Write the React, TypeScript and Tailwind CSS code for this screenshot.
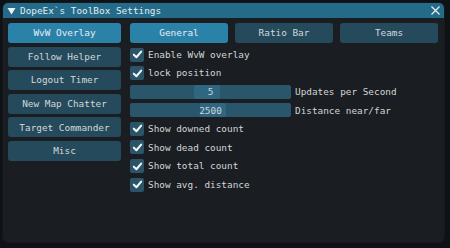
import React from "react";

const mono = { fontFamily: '"DejaVu Sans Mono", "Liberation Mono", monospace' };

function Check({ label }: { label: string }) {
  return (
    <div className="flex items-center h-[15px]">
      <div className="w-[14px] h-[14px] rounded-[2px] bg-[#2a5467] flex items-center justify-center">
        <svg width="11" height="11" viewBox="0 0 12 12">
          <polyline points="2,6.2 4.8,9 10,2.8" fill="none" stroke="#f2f4f5" strokeWidth="2.2" strokeLinecap="round" strokeLinejoin="round" />
        </svg>
      </div>
      <span className="ml-[4px] text-[#d2d5d7] leading-none">{label}</span>
    </div>
  );
}

function Slider({ value, label, grabLeft, grabWidth }: { value: string; label: string; grabLeft: number; grabWidth: number }) {
  return (
    <div className="flex items-center h-[15px]">
      <div className="relative w-[161px] h-[14px] rounded-[2px] bg-[#29566b] flex items-center justify-center">
        <div className="absolute top-0 bottom-0 bg-[#2f6782] rounded-[2px]" style={{ left: grabLeft, width: grabWidth }} />
        <span className="relative text-[#d2d5d7] leading-none">{value}</span>
      </div>
      <span className="ml-[4px] text-[#d2d5d7] leading-none">{label}</span>
    </div>
  );
}

export default function App() {
  const left = ["WvW Overlay", "Follow Helper", "Logout Timer", "New Map Chatter", "Target Commander", "Misc"];
  const tabs = ["General", "Ratio Bar", "Teams"];
  return (
    <div className="w-[450px] h-[248px] bg-[#0f1214] overflow-hidden text-[9.4px]" style={mono}>
      <div className="ml-[2px] mt-[2px] w-[443px] h-[241px] rounded-[6px] bg-[#1a1e22] overflow-hidden flex flex-col border border-[#14181b]">
        <div className="h-[15px] bg-[#236b89] flex items-center pl-[4px] pr-[3px] text-[#e4ecf0] shrink-0">
          <svg width="9" height="8" viewBox="0 0 9 8" className="mr-[4px]">
            <polygon points="0.5,1 8.5,1 4.5,7.5" fill="#eef3f5" />
          </svg>
          <span className="leading-none">DopeEx`s ToolBox Settings</span>
          <span className="ml-auto">
            <svg width="11" height="11" viewBox="0 0 11 11">
              <path d="M1.5 1.5 L9.5 9.5 M9.5 1.5 L1.5 9.5" stroke="#e4ecf0" strokeWidth="1.3" />
            </svg>
          </span>
        </div>
        <div className="flex pl-[5px] pt-[5px]">
          <div className="w-[113px] flex flex-col gap-[3.6px]">
            {left.map((t, i) => (
              <div
                key={t}
                className={
                  "h-[20px] rounded-[3px] flex items-center justify-center leading-none " +
                  (i === 0 ? "bg-[#2b82a9] text-[#e6eef2]" : "bg-[#244a5c] text-[#d2d8db]")
                }
              >
                {t}
              </div>
            ))}
          </div>
          <div className="ml-[9px] w-[308px] flex flex-col">
            <div className="flex gap-[7px]">
              {tabs.map((t, i) => (
                <div
                  key={t}
                  className={
                    "w-[98px] h-[20px] rounded-[3px] flex items-center justify-center leading-none " +
                    (i === 0 ? "bg-[#2b82a9] text-[#e6eef2]" : "bg-[#244a5c] text-[#d2d8db]")
                  }
                >
                  {t}
                </div>
              ))}
            </div>
            <div className="mt-[4px] flex flex-col gap-[3.6px]">
              <Check label="Enable WvW overlay" />
              <Check label="lock position" />
              <Slider value="5" label="Updates per Second" grabLeft={64} grabWidth={26} />
              <Slider value="2500" label="Distance near/far" grabLeft={70} grabWidth={26} />
              <Check label="Show downed count" />
              <Check label="Show dead count" />
              <Check label="Show total count" />
              <Check label="Show avg. distance" />
            </div>
          </div>
        </div>
      </div>
    </div>
  );
}
